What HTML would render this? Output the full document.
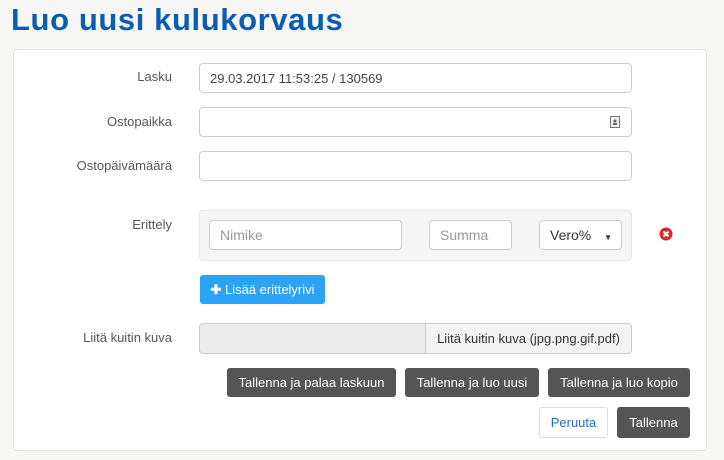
<!DOCTYPE html>
<html><head><style>
body{margin:0;width:724px;height:460px;background:#f7f7f5;font-family:"Liberation Sans",sans-serif;position:relative;overflow:hidden}
.a{position:absolute;box-sizing:border-box}
h1{position:absolute;left:11px;top:2px;margin:0;font-size:31px;font-weight:bold;color:#0a5db1;letter-spacing:0.6px}
.card{left:13px;top:49px;width:694px;height:402px;background:#fff;border:1px solid #e3e3e3;border-radius:4px}
.lab{font-size:13px;color:#555;text-align:right;width:160px;left:12px}
.in{background:#fff;border:1px solid #ccc;border-radius:4px;height:30px;font-size:13px;color:#444;padding:6px 10px;line-height:17px}
.ph{color:#999;font-size:14px}
.btn{background:#555;color:#fff;font-size:13px;border-radius:3px;text-align:center;line-height:29px;height:29px}
</style></head><body>
<h1>Luo uusi kulukorvaus</h1>
<div class="a card"></div>
<div class="a lab" style="top:69px">Lasku</div>
<div class="a in" style="left:199px;top:63px;width:433px">29.03.2017 11:53:25 / 130569</div>
<div class="a lab" style="top:114px">Ostopaikka</div>
<div class="a in" style="left:199px;top:107px;width:433px"></div>
<svg class="a" style="left:610px;top:116px" width="10" height="12"><rect x="0.5" y="0.5" width="9" height="11" fill="#eee" stroke="#777"/><circle cx="5" cy="5" r="1.5" fill="#666"/><rect x="3" y="7" width="4" height="2" fill="#666"/></svg>
<div class="a lab" style="top:158px">Ostopäivämäärä</div>
<div class="a in" style="left:199px;top:151px;width:433px"></div>
<div class="a lab" style="top:217px">Erittely</div>
<div class="a" style="left:199px;top:210px;width:433px;height:51px;background:#f5f5f5;border:1px solid #e6e6e6;border-radius:4px"></div>
<div class="a in ph" style="left:209px;top:220px;width:193px">Nimike</div>
<div class="a in ph" style="left:429px;top:220px;width:83px">Summa</div>
<div class="a in" style="left:539px;top:220px;width:83px;font-size:14px;color:#333">Vero%<span style="position:absolute;right:9px;top:8px;font-size:8px">▼</span></div>
<svg class="a" style="left:659px;top:227px" width="14" height="14"><circle cx="7" cy="7" r="6.5" fill="#d9262a"/><path d="M4.5 4.5L9.5 9.5M9.5 4.5L4.5 9.5" stroke="#fff" stroke-width="2.2"/></svg>
<div class="a" style="left:200px;top:275px;width:125px;height:29px;background:#2ba3f7;border-radius:3px;color:#fff;font-size:13px;line-height:29px;text-align:center"><b>✚</b> Lisää erittelyrivi</div>
<div class="a lab" style="top:330px">Liitä kuitin kuva</div>
<div class="a" style="left:199px;top:323px;width:227px;height:31px;background:#ececec;border:1px solid #ccc;border-radius:4px 0 0 4px"></div>
<div class="a" style="left:425px;top:323px;width:207px;height:31px;background:#f3f3f3;border:1px solid #ccc;border-radius:0 4px 4px 0;font-size:13px;color:#333;text-align:center;line-height:29px">Liitä kuitin kuva (jpg.png.gif.pdf)</div>
<div class="a btn" style="left:227px;top:368px;width:169px">Tallenna ja palaa laskuun</div>
<div class="a btn" style="left:405px;top:368px;width:134px">Tallenna ja luo uusi</div>
<div class="a btn" style="left:548px;top:368px;width:142px">Tallenna ja luo kopio</div>
<div class="a" style="left:539px;top:407px;width:69px;height:31px;border:1px solid #ddd;border-radius:3px;background:#fff;color:#1a6fc0;font-size:13px;text-align:center;line-height:29px">Peruuta</div>
<div class="a btn" style="left:617px;top:407px;width:73px;height:31px;line-height:31px">Tallenna</div>
</body></html>
